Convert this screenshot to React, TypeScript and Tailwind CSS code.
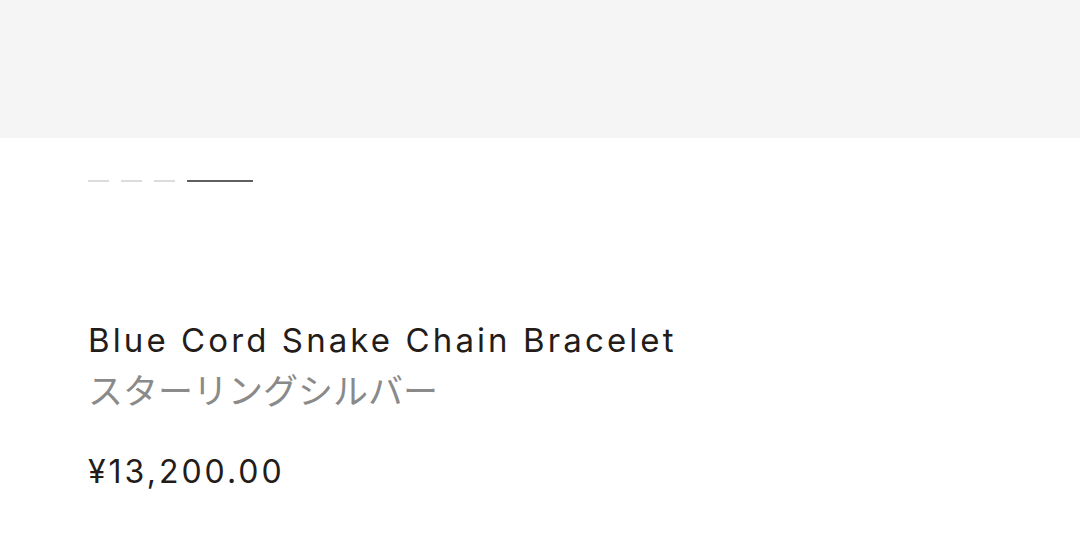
export default function App() {
  const dots = [false, false, false, true];
  return (
    <div className="w-[1080px] h-[546px] bg-white overflow-hidden" style={{ fontFamily: 'Inter, "Noto Sans CJK JP", sans-serif' }}>
      <div className="h-[138px] bg-[#f5f5f5]" />
      <div className="px-[88px]">
        <div className="flex items-center gap-[12px] mt-[42px]">
          {dots.map((active, i) => (
            <span
              key={i}
              className={active ? "block h-[2px] w-[66px] bg-[#5f5f5f]" : "block h-[2px] w-[21px] bg-[#dcdcdc]"}
            />
          ))}
        </div>
        <h1 className="mt-[138px] text-[33px] leading-[40px] text-[#231c19] tracking-[3.1px]">
          Blue Cord Snake Chain Bracelet
        </h1>
        <p className="mt-[8px] text-[35px] leading-[42px] text-[#8a8a8a]" style={{ fontFamily: '"Noto Sans CJK JP", sans-serif' }}>
          スターリングシルバー
        </p>
        <p className="mt-[42px] text-[32px] leading-[40px] text-[#231c19] tracking-[3px]">¥13,200.00</p>
      </div>
    </div>
  );
}
